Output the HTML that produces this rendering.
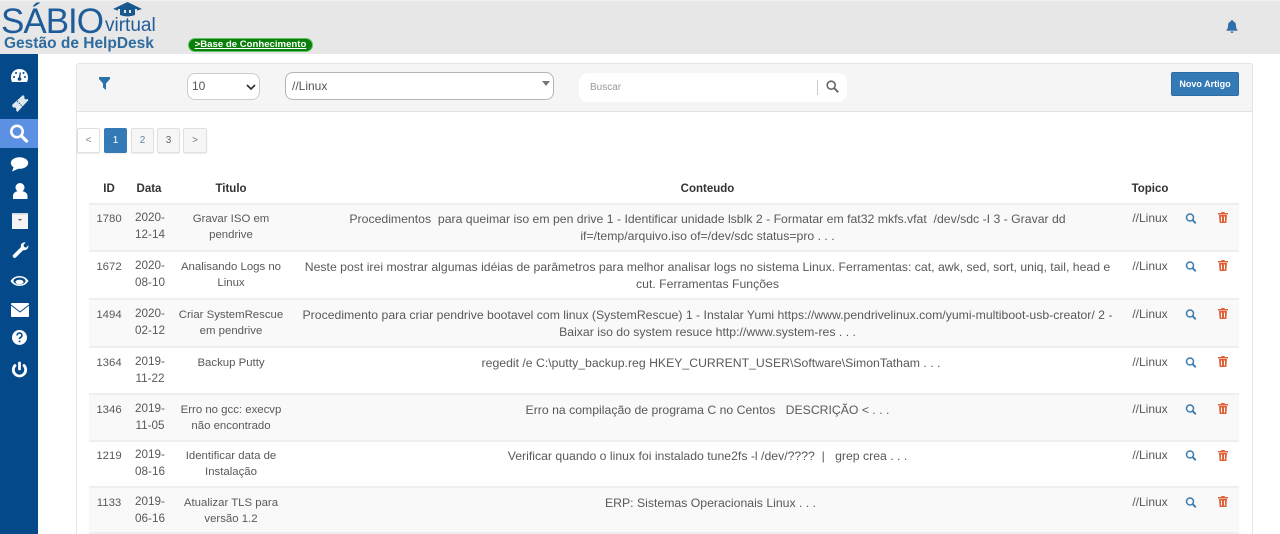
<!DOCTYPE html>
<html lang="pt">
<head>
<meta charset="utf-8">
<title>Sábio Virtual</title>
<style>
html,body{margin:0;padding:0;width:1280px;height:534px;overflow:hidden;background:#fff;font-family:"Liberation Sans",Arial,sans-serif;color:#555}
.a{position:absolute;white-space:pre}
.c{position:absolute;white-space:pre;text-align:center;font-size:12px;line-height:16.5px;color:#595959}
.i{left:89px;width:40px;font-size:11.4px;margin-top:1px}
.d{left:129px;width:42px;font-size:11.7px}
.t{left:171px;width:120px;font-size:11.4px;line-height:16px;margin-top:1px}
.k{left:291px;width:833px;font-size:12.25px;margin-top:1px}
.l{left:1124px;width:52px}
.th{position:absolute;white-space:pre;font-size:11.5px;font-weight:bold;color:#333;text-align:center;top:182px;line-height:14px}
.line{position:absolute;left:89px;width:1150px;height:2px;background:#eeeeee}
.odd{position:absolute;left:89px;width:1150px;background:#f9f9f9}
.pg{position:absolute;top:128px;height:25px;box-sizing:border-box;border:1px solid #e0e0e0;border-radius:2px;background:#f6f6f6;text-align:center;font-size:10px;line-height:23px;color:#5d84a6;box-shadow:0 1px 1px rgba(0,0,0,.08)}
svg{position:absolute;display:block}
</style>
</head>
<body>
<!-- Top header -->
<div class="a" style="left:0;top:0;width:1280px;height:54px;background:#e7e7e7;border-top:1px solid #f0f0f0;box-sizing:border-box"></div>
<div class="a" style="left:1px;top:0;font-size:35px;line-height:44px;color:#1f5d9a;letter-spacing:-1px">SÁBIO</div>
<div class="a" style="left:105px;top:15px;font-size:19px;line-height:22px;color:#1f5d9a">virtual</div>
<svg style="left:112px;top:1px" width="31" height="17" viewBox="0 0 31 17"><path d="M15.5 1 30 8l-5 1.600V8H6v1.600L1 8z" fill="#19588f"/><path d="M8 8h15v6q-7.500 3-15 0z" fill="#19588f"/><rect x="12" y="9" width="2" height="3" fill="#dfe6ec"/><rect x="17" y="9" width="2" height="3" fill="#dfe6ec"/></svg>
<div class="a" style="left:4px;top:34px;font-size:15.5px;line-height:19px;font-weight:bold;color:#2f6c9e">Gestão de HelpDesk</div>
<div class="a" style="left:188px;top:38px;width:125px;height:14px;box-sizing:border-box;background:#0b7f0b;border:1px solid #5fc45f;border-radius:7px;color:#fff;font-size:9.6px;font-weight:bold;line-height:12px;text-align:center;text-decoration:underline">&gt;Base de Conhecimento</div>
<svg style="left:1226px;top:20px" width="12" height="13" viewBox="0 0 12 13"><path d="M6 0a1 1 0 0 1 1 1.200C9 1.700 10 3.300 10 5.500c0 2.500.6 3.500 1.500 4.500v.8H.5V10C1.400 9 2 8 2 5.500 2 3.300 3 1.700 5 1.200A1 1 0 0 1 6 0z" fill="#2f70a8"/><path d="M4.500 11.500h3a1.500 1.500 0 0 1-3 0z" fill="#2f70a8"/></svg>

<!-- Sidebar -->
<div class="a" style="left:0;top:54px;width:38px;height:480px;background:#044a8b"></div>
<div class="a" style="left:0;top:119px;width:38px;height:29px;background:#5b90e2"></div>
<svg style="left:0;top:54px" width="38" height="340" viewBox="0 0 38 340" fill="#fff">
<!-- gauge -->
<path d="M19.500 15c-5.500 0-8.500 4-8.500 8.500 0 1.800.4 3.300 1 4.500h15c.6-1.200 1-2.700 1-4.500 0-4.500-3-8.500-8.500-8.500z"/>
<path d="M19.500 24l.8-5.500" stroke="#044a8b" stroke-width="1.300"/><circle cx="19.500" cy="25" r="1.800" fill="#044a8b"/><circle cx="14" cy="23" r="1" fill="#044a8b"/><circle cx="16" cy="19" r="1" fill="#044a8b"/><circle cx="25" cy="23" r="1" fill="#044a8b"/><circle cx="23.500" cy="19" r="1" fill="#044a8b"/>
<!-- ticket -->
<path d="M12 51 23 41l1.600 1.700c-.6 1-.2 2.100.8 2.500.9.300 1.500 0 2-.4l1 1.400L17.500 58 16 56.300c.6-1 .3-2-.6-2.600-1-.6-1.800-.3-2.300.2z" fill="#dfe8ef"/>
<path d="M17 47l6 6" stroke="#044a8b" stroke-width=".9" stroke-dasharray="1.500 1"/>
<!-- search -->
<circle cx="17" cy="77.500" r="5.700" fill="none" stroke="#fff" stroke-width="2.600"/><path d="M21.500 82l5 5" stroke="#fff" stroke-width="3.300" stroke-linecap="round"/>
<!-- chat -->
<ellipse cx="19.500" cy="109" rx="8.700" ry="5.800"/><path d="M14 112l-2 5.500 7-3z"/>
<!-- user -->
<circle cx="20" cy="133.500" r="4.500"/><path d="M13 145v-3c0-3.500 3-5 7-5s7.500 1.500 7.500 5v3z"/>
<!-- box -->
<rect x="12" y="159" width="16" height="16" fill="#f4f4f4"/><rect x="12" y="159" width="16" height="1.500" fill="#cfd6dc"/><rect x="18.500" y="165" width="3" height="1.300" fill="#555"/>
<!-- wrench -->
<path d="M13.500 200.500l7.500-7.500c-.8-2.800 1.500-5 4.700-4.500l-2.200 2.400.6 2.100 2.100.6 2.200-2.300c.4 3.300-2.400 5.500-5.200 4.800L15.800 203.500a1.700 1.700 0 0 1-2.300-3z"/>
<!-- eye -->
<path d="M10.500 227c2-3.300 5.300-5 9-5s7 1.700 9 5c-2 3.300-5.300 5-9 5s-7-1.700-9-5z"/><ellipse cx="19.500" cy="227" rx="6" ry="3.500" fill="#044a8b"/><ellipse cx="19.500" cy="228" rx="4" ry="2.300"/>
<!-- mail -->
<rect x="11" y="249" width="18" height="14" rx="1"/><path d="M11 251l9 7 9-7" fill="none" stroke="#044a8b" stroke-width="1"/>
<!-- question -->
<circle cx="19.500" cy="283.500" r="7.500"/><path d="M17 281.500c0-3.200 5-3.200 5 0 0 1.800-2.500 1.800-2.500 3.500" fill="none" stroke="#044a8b" stroke-width="1.600"/><rect x="18.700" y="286.500" width="1.700" height="1.700" fill="#044a8b"/>
<!-- power -->
<path d="M15 311.500a6.200 6.200 0 1 0 9 0" fill="none" stroke="#fff" stroke-width="2.800" stroke-linecap="round"/><path d="M19.500 309v6" stroke="#fff" stroke-width="2.800" stroke-linecap="round"/>
</svg>

<!-- Panel -->
<div class="a" style="left:76px;top:63px;width:1177px;height:471px;box-sizing:border-box;border:1px solid #e5e5e5;border-bottom:none;border-radius:3px 3px 0 0;background:#fff"></div>
<div class="a" style="left:77px;top:64px;width:1175px;height:47px;background:#f5f5f5;border-bottom:1px solid #e2e2e2"></div>
<svg style="left:99px;top:77px" width="11" height="13" viewBox="0 0 11 13"><path d="M0 0h11v2L7 6.500V13L4 10.500v-4L0 2z" fill="#2a73ab"/></svg>

<div class="a" style="left:187px;top:73px;width:73px;height:27px;box-sizing:border-box;background:#fff;border:1px solid #ccc;border-radius:8px;font-size:12px;line-height:25px;padding-left:4px;color:#555">10</div>
<svg style="left:246px;top:84px" width="10" height="6" viewBox="0 0 10 6"><path d="M1 1l4 4 4-4" fill="none" stroke="#333" stroke-width="1.700"/></svg>
<div class="a" style="left:285px;top:72px;width:269px;height:28px;box-sizing:border-box;background:#fff;border:1px solid #b5b5b5;border-radius:8px;font-size:12px;line-height:26px;padding-left:6px;color:#555">//Linux</div>
<svg style="left:542px;top:81px" width="8" height="5" viewBox="0 0 8 5"><path d="M0 0h8L4 5z" fill="#777"/></svg>
<div class="a" style="left:579px;top:73px;width:268px;height:29px;box-sizing:border-box;background:#fff;border-radius:9px;font-size:10px;line-height:29px;padding-left:11px;color:#999">Buscar</div>
<div class="a" style="left:817px;top:80px;width:1px;height:15px;background:#ccc"></div>
<svg style="left:826px;top:80px" width="13" height="13" viewBox="0 0 13 13"><circle cx="5.200" cy="5.200" r="4" fill="none" stroke="#666" stroke-width="1.600"/><path d="M8.200 8.200l4 4" stroke="#666" stroke-width="1.900"/></svg>
<div class="a" style="left:1171px;top:72px;width:68px;height:24px;box-sizing:border-box;background:#337ab7;border:1px solid #2e6da4;border-radius:2px;color:#fff;font-size:9px;font-weight:bold;line-height:22px;text-align:center">Novo Artigo</div>

<!-- Pagination -->
<div class="pg" style="left:77px;width:23px;background:#fff;color:#888">&lt;</div>
<div class="pg" style="left:104px;width:23px;background:#337ab7;border-color:#337ab7;color:#fff">1</div>
<div class="pg" style="left:131px;width:23px">2</div>
<div class="pg" style="left:157px;width:23px;color:#666">3</div>
<div class="pg" style="left:183px;width:24px;color:#777">&gt;</div>

<!-- Table header -->
<div class="th" style="left:89px;width:40px">ID</div>
<div class="th" style="left:129px;width:40px">Data</div>
<div class="th" style="left:171px;width:120px">Titulo</div>
<div class="th" style="left:291px;width:833px">Conteudo</div>
<div class="th" style="left:1124px;width:52px">Topico</div>

<!-- Stripes -->
<div class="odd" style="top:203px;height:48px"></div>
<div class="odd" style="top:299px;height:48px"></div>
<div class="odd" style="top:394px;height:46px"></div>
<div class="odd" style="top:487px;height:45px"></div>
<div class="line" style="top:203px"></div>
<div class="line" style="top:250px"></div>
<div class="line" style="top:298px"></div>
<div class="line" style="top:346px"></div>
<div class="line" style="top:393px"></div>
<div class="line" style="top:440px"></div>
<div class="line" style="top:486px"></div>
<div class="line" style="top:532px"></div>

<!-- Row 1 -->
<div class="c i" style="top:210px">1780</div>
<div class="c d" style="top:210px">2020-
12-14</div>
<div class="c t" style="top:210px">Gravar ISO em
pendrive</div>
<div class="c k" style="top:210px">Procedimentos  para queimar iso em pen drive 1 - Identificar unidade lsblk 2 - Formatar em fat32 mkfs.vfat  /dev/sdc -I 3 - Gravar dd
if=/temp/arquivo.iso of=/dev/sdc status=pro . . .</div>
<div class="c l" style="top:210px">//Linux</div>

<!-- Row 2 -->
<div class="c i" style="top:258px">1672</div>
<div class="c d" style="top:258px">2020-
08-10</div>
<div class="c t" style="top:258px">Analisando Logs no
Linux</div>
<div class="c k" style="top:258px">Neste post irei mostrar algumas idéias de parâmetros para melhor analisar logs no sistema Linux. Ferramentas: cat, awk, sed, sort, uniq, tail, head e
cut. Ferramentas Funções</div>
<div class="c l" style="top:258px">//Linux</div>

<!-- Row 3 -->
<div class="c i" style="top:306px">1494</div>
<div class="c d" style="top:306px">2020-
02-12</div>
<div class="c t" style="top:306px">Criar SystemRescue
em pendrive</div>
<div class="c k" style="top:306px">Procedimento para criar pendrive bootavel com linux (SystemRescue) 1 - Instalar Yumi https://www.pendrivelinux.com/yumi-multiboot-usb-creator/ 2 -
Baixar iso do system resuce http://www.system-res . . .</div>
<div class="c l" style="top:306px">//Linux</div>

<!-- Row 4 -->
<div class="c i" style="top:354px">1364</div>
<div class="c d" style="top:354px">2019-
11-22</div>
<div class="c t" style="top:354px">Backup Putty</div>
<div class="c k" style="top:354px;left:294.5px">regedit /e C:\putty_backup.reg HKEY_CURRENT_USER\Software\SimonTatham . . .</div>
<div class="c l" style="top:354px">//Linux</div>

<!-- Row 5 -->
<div class="c i" style="top:401px">1346</div>
<div class="c d" style="top:401px">2019-
11-05</div>
<div class="c t" style="top:401px">Erro no gcc: execvp
não encontrado</div>
<div class="c k" style="top:401px">Erro na compilação de programa C no Centos   DESCRIÇÃO &lt; . . .</div>
<div class="c l" style="top:401px">//Linux</div>

<!-- Row 6 -->
<div class="c i" style="top:447px">1219</div>
<div class="c d" style="top:447px">2019-
08-16</div>
<div class="c t" style="top:447px">Identificar data de
Instalação</div>
<div class="c k" style="top:447px">Verificar quando o linux foi instalado tune2fs -l /dev/????  |   grep crea . . .</div>
<div class="c l" style="top:447px">//Linux</div>

<!-- Row 7 -->
<div class="c i" style="top:494px">1133</div>
<div class="c d" style="top:494px">2019-
06-16</div>
<div class="c t" style="top:494px">Atualizar TLS para
versão 1.2</div>
<div class="c k" style="top:494px;left:294px">ERP: Sistemas Operacionais Linux . . .</div>
<div class="c l" style="top:494px">//Linux</div>

<!-- Action icons -->
<svg style="left:1185px;top:0" width="45" height="534" viewBox="0 0 45 534">
<g fill="none" stroke="#3a7cae" stroke-linecap="round">
<g transform="translate(0,213)"><circle cx="5" cy="4.500" r="3.500" stroke-width="1.500"/><path d="M7.700 7.200l2.500 2.500" stroke-width="2"/></g>
<g transform="translate(0,261)"><circle cx="5" cy="4.500" r="3.500" stroke-width="1.500"/><path d="M7.700 7.200l2.500 2.500" stroke-width="2"/></g>
<g transform="translate(0,309)"><circle cx="5" cy="4.500" r="3.500" stroke-width="1.500"/><path d="M7.700 7.200l2.500 2.500" stroke-width="2"/></g>
<g transform="translate(0,357)"><circle cx="5" cy="4.500" r="3.500" stroke-width="1.500"/><path d="M7.700 7.200l2.500 2.500" stroke-width="2"/></g>
<g transform="translate(0,404)"><circle cx="5" cy="4.500" r="3.500" stroke-width="1.500"/><path d="M7.700 7.200l2.500 2.500" stroke-width="2"/></g>
<g transform="translate(0,450)"><circle cx="5" cy="4.500" r="3.500" stroke-width="1.500"/><path d="M7.700 7.200l2.500 2.500" stroke-width="2"/></g>
<g transform="translate(0,497)"><circle cx="5" cy="4.500" r="3.500" stroke-width="1.500"/><path d="M7.700 7.200l2.500 2.500" stroke-width="2"/></g>
</g>
<g fill="#e0603a">
<path transform="translate(33,212)" d="M3.500 0h3l.5 1H10v1.500H0V1h3zM1 3h8l-.6 8H1.600zM3 4.500v5h1v-5zM6 4.500v5h1v-5z" fill-rule="evenodd"/>
<path transform="translate(33,260)" d="M3.500 0h3l.5 1H10v1.500H0V1h3zM1 3h8l-.6 8H1.600zM3 4.500v5h1v-5zM6 4.500v5h1v-5z" fill-rule="evenodd"/>
<path transform="translate(33,308)" d="M3.500 0h3l.5 1H10v1.500H0V1h3zM1 3h8l-.6 8H1.600zM3 4.500v5h1v-5zM6 4.500v5h1v-5z" fill-rule="evenodd"/>
<path transform="translate(33,356)" d="M3.500 0h3l.5 1H10v1.500H0V1h3zM1 3h8l-.6 8H1.600zM3 4.500v5h1v-5zM6 4.500v5h1v-5z" fill-rule="evenodd"/>
<path transform="translate(33,403)" d="M3.500 0h3l.5 1H10v1.500H0V1h3zM1 3h8l-.6 8H1.600zM3 4.500v5h1v-5zM6 4.500v5h1v-5z" fill-rule="evenodd"/>
<path transform="translate(33,450)" d="M3.500 0h3l.5 1H10v1.500H0V1h3zM1 3h8l-.6 8H1.600zM3 4.500v5h1v-5zM6 4.500v5h1v-5z" fill-rule="evenodd"/>
<path transform="translate(33,496)" d="M3.500 0h3l.5 1H10v1.500H0V1h3zM1 3h8l-.6 8H1.600zM3 4.500v5h1v-5zM6 4.500v5h1v-5z" fill-rule="evenodd"/>
</g>
</svg>
</body>
</html>
